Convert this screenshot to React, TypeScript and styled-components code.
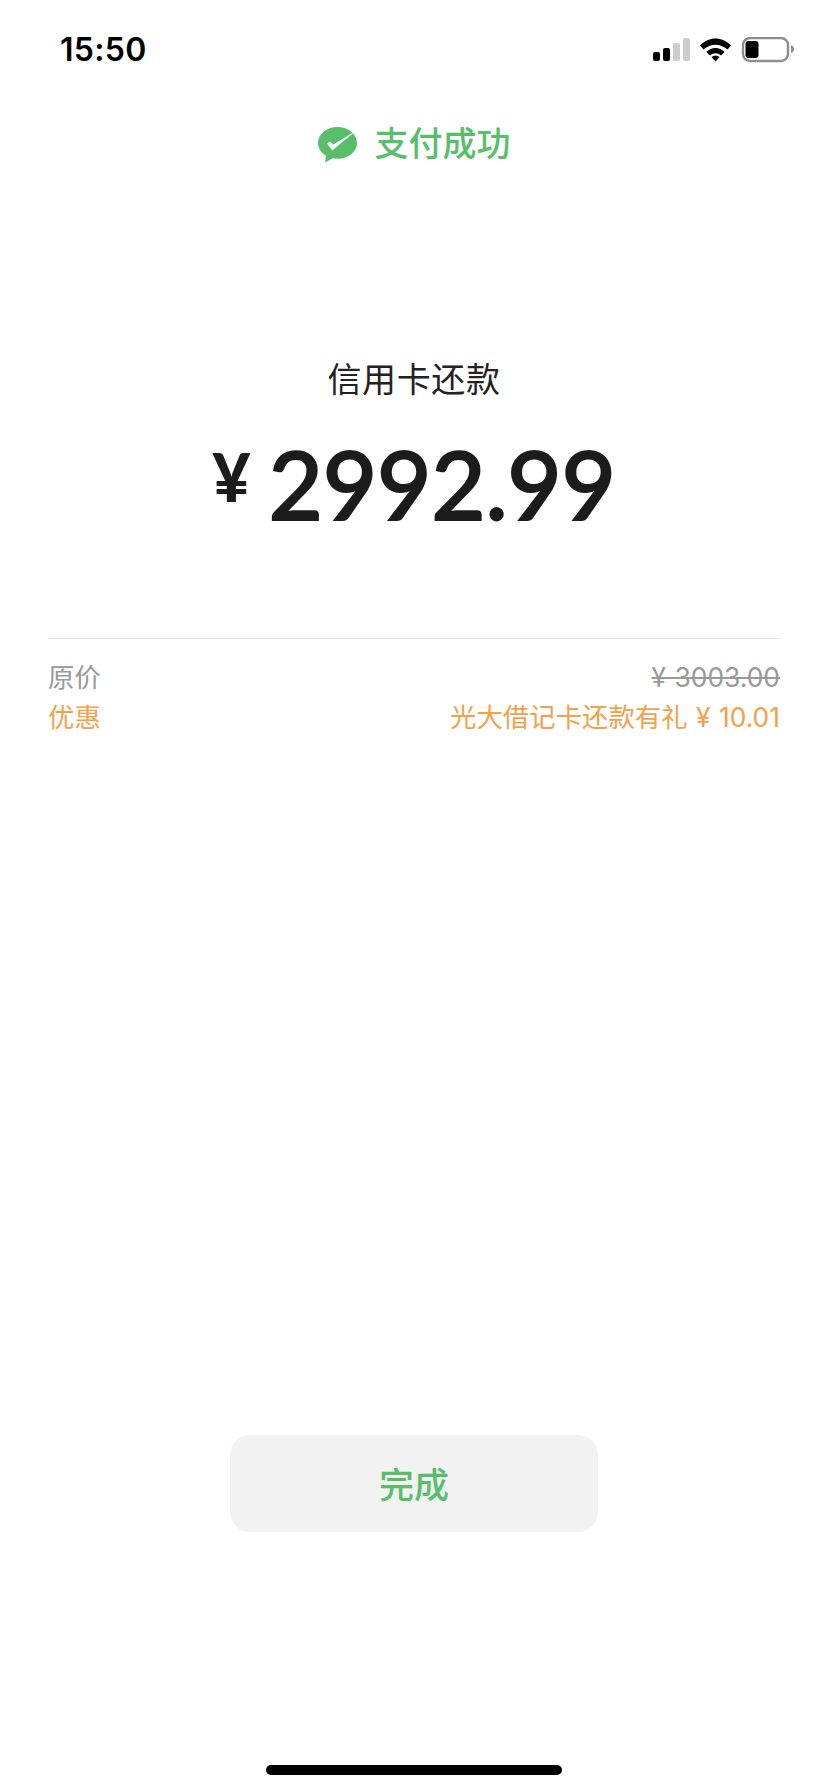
import React from "react";
import styled, { createGlobalStyle } from "styled-components";

const Global = createGlobalStyle`
  html, body { margin: 0; padding: 0; background: #fff; }
  body { font-family: "Inter", "Noto Sans CJK SC", sans-serif; }
`;

const Page = styled.div`
  width: 828px;
  height: 1792px;
  display: flex;
  flex-direction: column;
  overflow: hidden;
  background: #fff;
`;

const StatusBar = styled.header`
  padding: 37px 34px 0 60px;
  box-sizing: border-box;
  height: 99px;
  display: flex;
  justify-content: space-between;
  align-items: flex-start;
`;

const Time = styled.span`
  font-family: "Inter", sans-serif;
  font-size: 32px;
  font-weight: 600;
  line-height: 26px;
  color: #000;
  letter-spacing: 0.3px;
`;

const StatusIcons = styled.svg`
  display: block;
`;

const SuccessRow = styled.div`
  margin-top: 22px;
  height: 42px;
  display: flex;
  justify-content: center;
  align-items: center;
  gap: 17px;
`;

const LogoMark = styled.svg`
  display: block;
  margin-top: 5px;
`;

const SuccessText = styled.span`
  font-family: "Noto Sans CJK SC", sans-serif;
  font-size: 34px;
  font-weight: 500;
  line-height: 42px;
  color: #57be6a;
`;

const Title = styled.div`
  margin-top: 193px;
  text-align: center;
  font-family: "Noto Sans CJK SC", sans-serif;
  font-size: 34px;
  font-weight: 400;
  line-height: 44px;
  letter-spacing: 0.6px;
  color: #222;
`;

const Amount = styled.div`
  margin-top: 29px;
  height: 110px;
  display: flex;
  justify-content: center;
  align-items: center;
  gap: 18px;
  color: #1c1c1c;
`;

const Currency = styled.span`
  font-family: "Lato", sans-serif;
  font-size: 66px;
  font-weight: 900;
  line-height: 60px;
  margin-top: -14px;
`;

const Digits = styled.span`
  font-family: "Lato", sans-serif;
  font-size: 94px;
  font-weight: 500;
  line-height: 110px;
  letter-spacing: -0.3px;
  -webkit-text-stroke: 1.8px #1c1c1c;
`;

const Details = styled.section`
  margin: 99px 48px 0;
  padding-top: 18px;
  border-top: 1px solid #e6e6e6;
`;

const DetailRow = styled.div<{ $accent?: boolean }>`
  display: flex;
  justify-content: space-between;
  font-family: "Inter", "Noto Sans CJK SC", sans-serif;
  font-size: 26.4px;
  line-height: 40px;
  font-weight: 400;
  word-spacing: 1px;
  color: ${(p) => (p.$accent ? "#f5a04a" : "#999")};
`;

const Struck = styled.span`
  text-decoration: line-through;
`;

const Spacer = styled.div`
  flex: 1;
`;

const DoneButton = styled.button`
  align-self: center;
  width: 368px;
  height: 97px;
  border: 0;
  border-radius: 20px;
  background: #f2f2f2;
  color: #57be6a;
  font-family: "Noto Sans CJK SC", sans-serif;
  font-size: 35px;
  font-weight: 500;
  line-height: 93px;
  padding: 0 0 3px;
`;

const HomeArea = styled.div`
  height: 260px;
  padding-bottom: 17px;
  box-sizing: border-box;
  display: flex;
  justify-content: center;
  align-items: flex-end;
`;

const HomeBar = styled.div`
  width: 296px;
  height: 10px;
  border-radius: 5px;
  background: #000;
`;

const SignalAndBattery = () => (
  <StatusIcons width="142" height="26" viewBox="652 37 142 26">
    <rect x="653" y="52" width="7" height="9" rx="2" fill="#000" />
    <rect x="663" y="48" width="7" height="13" rx="2" fill="#000" />
    <rect x="673" y="43" width="7" height="18" rx="2" fill="#ccc" />
    <rect x="683" y="38" width="7" height="23" rx="2" fill="#ccc" />
    <path d="M700 45.5 C709 36 722 36 731 45.5 L727.5 49.5 C720.5 43 710.5 43 703.5 49.5 Z" fill="#000" />
    <path d="M706.5 52 C711.5 46.7 719.5 46.7 724.5 52 L721 55.5 C717.8 52.5 713.2 52.5 710 55.5 Z" fill="#000" />
    <path d="M711.5 57 C714 55 717 55 719.5 57 L715.5 61.5 Z" fill="#000" />
    <rect x="743" y="38" width="45" height="23" rx="7" fill="none" stroke="#8e8e8e" strokeWidth="2.4" />
    <rect x="745.5" y="41" width="13" height="17" rx="3" fill="#000" />
    <path d="M791 45 C793.5 46 794 47.5 794 49 C794 50.5 793.5 52 791 53 Z" fill="#8e8e8e" />
  </StatusIcons>
);

const WeChatPayLogo = () => (
  <LogoMark width="40" height="36" viewBox="0 0 40 36">
    <path d="M19.5 0C8.7 0 0 7.2 0 16c0 5.3 3.1 9.9 7.9 12.8L7 35.5l7.8-4.3c1.5.3 3.1.5 4.7.5C30.3 31.7 39 24.6 39 15.9 39 7.1 30.3 0 19.5 0Z" fill="#57be6a" />
    <path d="M9 16.5l2.8-1.9 3.4 3L38.5 3.5 14.2 23.5Z" fill="#fff" />
  </LogoMark>
);

export default function App() {
  return (
    <Page>
      <Global />
      <StatusBar>
        <Time>15:50</Time>
        <SignalAndBattery />
      </StatusBar>
      <SuccessRow>
        <WeChatPayLogo />
        <SuccessText>支付成功</SuccessText>
      </SuccessRow>
      <Title>信用卡还款</Title>
      <Amount>
        <Currency>¥</Currency>
        <Digits>2992.99</Digits>
      </Amount>
      <Details>
        <DetailRow>
          <span>原价</span>
          <Struck>¥ 3003.00</Struck>
        </DetailRow>
        <DetailRow $accent>
          <span>优惠</span>
          <span>光大借记卡还款有礼 ¥ 10.01</span>
        </DetailRow>
      </Details>
      <Spacer />
      <DoneButton>完成</DoneButton>
      <HomeArea>
        <HomeBar />
      </HomeArea>
    </Page>
  );
}
